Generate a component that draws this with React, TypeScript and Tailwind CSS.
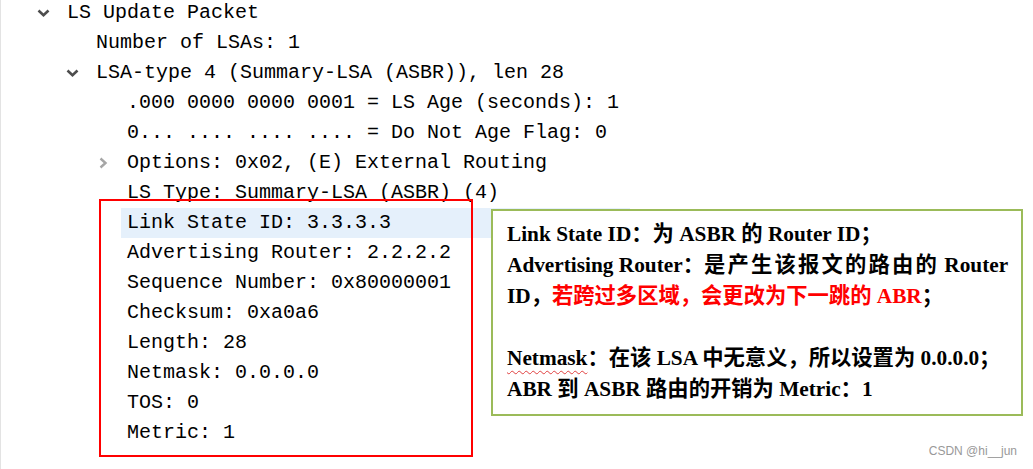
import React from "react";

type Row = {
  level: 0 | 1 | 2;
  text: string;
  toggle?: "open" | "closed";
  selected?: boolean;
};

const rows: Row[] = [
  { level: 0, text: "LS Update Packet", toggle: "open" },
  { level: 1, text: "Number of LSAs: 1" },
  { level: 1, text: "LSA-type 4 (Summary-LSA (ASBR)), len 28", toggle: "open" },
  { level: 2, text: ".000 0000 0000 0001 = LS Age (seconds): 1" },
  { level: 2, text: "0... .... .... .... = Do Not Age Flag: 0" },
  { level: 2, text: "Options: 0x02, (E) External Routing", toggle: "closed" },
  { level: 2, text: "LS Type: Summary-LSA (ASBR) (4)" },
  { level: 2, text: "Link State ID: 3.3.3.3", selected: true },
  { level: 2, text: "Advertising Router: 2.2.2.2" },
  { level: 2, text: "Sequence Number: 0x80000001" },
  { level: 2, text: "Checksum: 0xa0a6" },
  { level: 2, text: "Length: 28" },
  { level: 2, text: "Netmask: 0.0.0.0" },
  { level: 2, text: "TOS: 0" },
  { level: 2, text: "Metric: 1" },
];

// indent of the toggle column for each tree level
const indent = ["pl-[36px]", "pl-[65px]", "pl-[96px]"];

function Toggle({ state }: { state?: "open" | "closed" }) {
  if (state === "open") {
    return (
      <svg width="13" height="8" viewBox="0 0 13 8" className="mb-[1px]">
        <polyline points="1.5,1.5 6.5,6.2 11.5,1.5" fill="none" stroke="#4d4d4d" strokeWidth="2.6" />
      </svg>
    );
  }
  if (state === "closed") {
    return (
      <svg width="9" height="12" viewBox="0 0 9 12" className="ml-[2px]">
        <polyline points="1.5,1.5 6.5,6 1.5,10.5" fill="none" stroke="#a6a6a6" strokeWidth="2.4" />
      </svg>
    );
  }
  return null;
}

function TreeRow({ row }: { row: Row }) {
  return (
    <div className={`flex h-[30px] items-center ${indent[row.level]}`}>
      <div className="flex w-[24px] items-center">
        <Toggle state={row.toggle} />
      </div>
      <div
        className={`flex h-[30px] items-center whitespace-pre pl-[6px] ${
          row.selected ? "w-[509px] bg-[#e5f0fb]" : ""
        }`}
      >
        {row.text}
      </div>
    </div>
  );
}

export default function App() {
  return (
    <div className="relative h-[469px] w-[1033px] overflow-hidden border-l border-[#e3e3e3] bg-white">
      <div className="-mt-[2px] text-[20px] text-black [font-family:'Liberation_Mono',monospace]">
        {rows.map((row, i) => (
          <TreeRow key={i} row={row} />
        ))}
      </div>

      {/* red highlight frame */}
      <div className="absolute left-[98px] top-[199px] h-[258px] w-[374px] border-2 border-[#ff0000]" />

      {/* annotation callout */}
      <div className="absolute left-[490px] top-[209px] h-[207px] w-[532px] border-2 border-[#9bbb59] bg-white pl-[14px] pt-[8px] text-[21.3px] font-bold leading-[31px] text-black [font-family:'Liberation_Serif','Noto_Sans_CJK_SC',serif]">
        <div className="whitespace-nowrap">Link State ID：为 ASBR 的 Router ID；</div>
        <div className="whitespace-nowrap">
          Advertising Router：<span className="tracking-[2.2px]">是产生该报文的路由的</span> Router
        </div>
        <div className="whitespace-nowrap">
          ID，<span className="text-[#ff0000]">若跨过多区域，会更改为下一跳的 ABR</span>；
        </div>
        <div className="h-[31px]" />
        <div className="whitespace-nowrap">
          <span className="underline decoration-[#e04040] decoration-wavy decoration-1 underline-offset-[5px]">Netmask</span>：在该 LSA 中无意义，所以设置为 0.0.0.0；
        </div>
        <div className="whitespace-nowrap">ABR 到 ASBR 路由的开销为 Metric：1</div>
      </div>

      <div className="absolute bottom-[9px] right-[16px] text-[12px] text-[#999999] [font-family:'Liberation_Sans',sans-serif]">
        CSDN @hi__jun
      </div>
    </div>
  );
}
